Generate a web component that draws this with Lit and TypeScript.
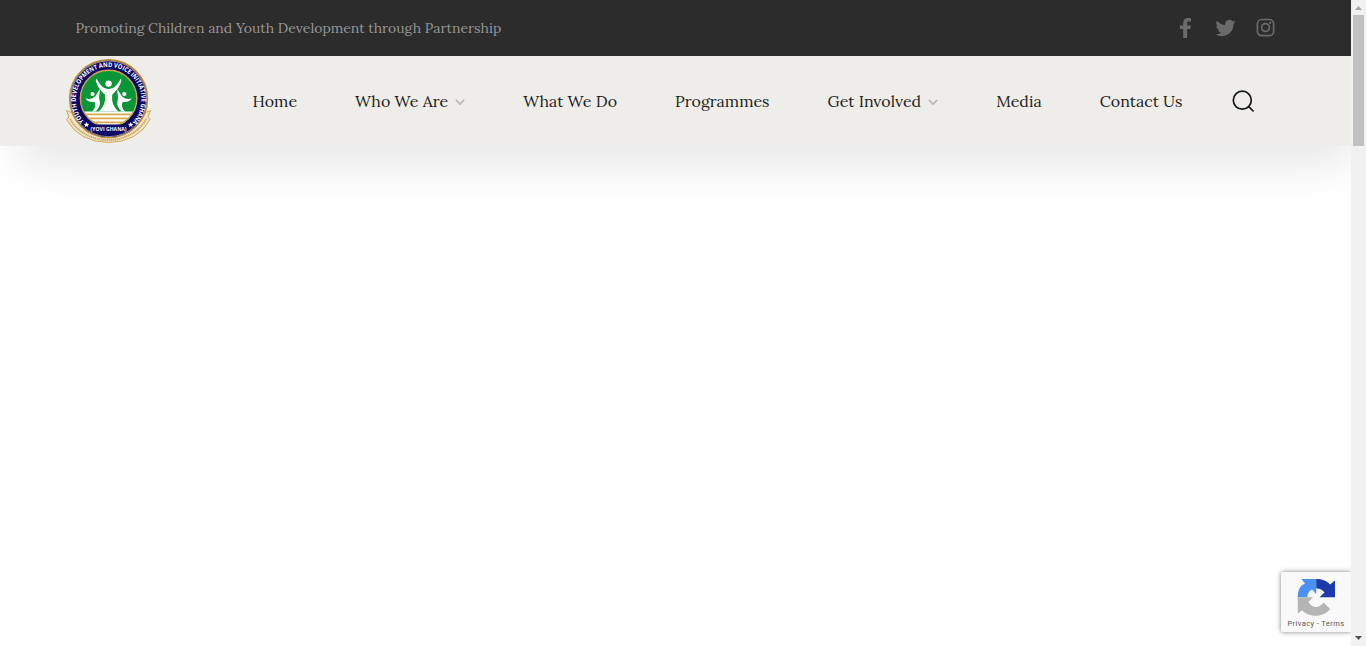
import { LitElement, html, css } from "lit";
import { customElement } from "lit/decorators.js";

type NavItem = { label: string; menu?: boolean };

const NAV: NavItem[] = [
  { label: "Home" },
  { label: "Who We Are", menu: true },
  { label: "What We Do" },
  { label: "Programmes" },
  { label: "Get Involved", menu: true },
  { label: "Media" },
  { label: "Contact Us" },
];

@customElement("yovi-logo")
class YoviLogo extends LitElement {
  static styles = css`
    :host { display: block; flex: none; width: 86px; height: 86px; }
    svg { display: block; overflow: visible; }
    .ring { font: 700 6.5px "Open Sans", sans-serif; fill: #fff; }
    .name { font: 700 5.6px "Open Sans", sans-serif; fill: #fff; }
  `;
  render() {
    return html`<svg width="86" height="86" viewBox="0 0 86 86">
      <defs>
        <path id="arc" d="M18 63.500 A32.800 32.800 0 1 1 67.200 63.500" />
        <clipPath id="disc"><circle cx="42.600" cy="40.500" r="27.500" /></clipPath>
      </defs>
      <path d="M.5 52.500L4 54 81 54 84.500 52.500 82 59 84 61.500Q72 84 42.600 84.500 13 84 .5 61.500L3 59Z" fill="#f0e5cc" stroke="#cf9c48" stroke-width=".9" />
      <path d="M4 61Q16 81 42.600 82.300 68 81 80.500 61" fill="none" stroke="#cda55e" stroke-width="2" stroke-dasharray="1.300 .7" />
      <circle cx="42.600" cy="40.800" r="39" fill="#0b0963" stroke="#c48e30" stroke-width="1.400" />
      <circle cx="42.600" cy="40.800" r="37.900" fill="none" stroke="#e6dcc2" stroke-width=".6" />
      <circle cx="42.600" cy="40.500" r="28.200" fill="#089636" stroke="#d3a550" stroke-width="1.400" />
      <g clip-path="url(#disc)">
        <path d="M10 53.500H74V70H10Z" fill="#fff" />
        <path d="M10 56.300H74M10 60.300H74M10 64.300H74" stroke="#dda849" stroke-width="1.700" />
      </g>
      <path d="M20.500 66.500H64.700C58 71 50 73 42.600 73S26 71 20.500 66.500Z" fill="#0b0963" />
      <g fill="#fff">
        <circle cx="42.600" cy="25.600" r="3.200" />
        <circle cx="26.500" cy="36" r="2.100" />
        <circle cx="58.300" cy="36" r="2.100" />
        <path d="M30.800 21C34 27 37.500 31 42.600 31S51.500 27 54.400 21L55.500 22C54 29 50 33 46.300 36.500C45.500 43 47 49 52.600 53.500H32.600C38.200 49 39.700 43 38.900 36.500C35.200 33 31 29 29.700 22Z" />
        <path d="M19.500 40.500C23 41.500 27 41 29.500 38L33.800 31C34 36 32.500 39 33.500 42C35 47 32.500 51 29.500 53.500H26C29.500 50 30 47 28.500 44C25 44 21 43.500 19.500 40.500ZM65.700 40.500C62.200 41.500 58.200 41 55.700 38L51.400 31C51.200 36 52.700 39 51.700 42C50.200 47 52.700 51 55.700 53.500H59.200C55.700 50 55.200 47 56.700 44C60.200 44 64.200 43.500 65.700 40.500Z" />
      </g>
      <text class="ring"><textPath href="#arc" textLength="151" lengthAdjust="spacingAndGlyphs">YOUTH DEVELOPMENT AND VOICE INITIATIVE GHANA</textPath></text>
      <text class="name" x="42.600" y="73" text-anchor="middle" textLength="36" lengthAdjust="spacingAndGlyphs">(YOVI GHANA)</text>
      <path d="M20.500 64l.8 1.700 1.900.2-1.400 1.300.4 1.900-1.700-1-1.700 1 .4-1.900-1.400-1.300 1.900-.2zM64.700 64l.8 1.700 1.900.2-1.400 1.300.4 1.900-1.700-1-1.700 1 .4-1.900-1.400-1.300 1.900-.2z" fill="#fff" />
    </svg>`;
  }
}

@customElement("app-root")
class AppRoot extends LitElement {
  static styles = css`
    :host { display: flex; width: 100%; height: 646px; overflow: hidden; background: #fff; position: relative; font-family: Lora, "Liberation Serif", serif; }
    svg { display: block; flex: none; overflow: visible; }
    .page { flex: 1; min-width: 0; overflow: hidden; position: relative; }
    .top { height: 56px; box-sizing: border-box; padding: 0 75.500px; background: #2c2c2c; display: flex; align-items: center; justify-content: space-between; }
    .social { display: flex; gap: 20px; align-items: center; fill: #6b6b6b; }
    .fb { margin-right: 4px; }
    .tag { font-size: 14px; line-height: 24px; color: #989898; white-space: nowrap; }
    .link { font-size: 16px; line-height: 24px; color: #1c1e22; white-space: nowrap; }
    .bar { height: 90px; box-sizing: border-box; background: #eeede9; box-shadow: 10px 28px 46px -10px rgba(0, 0, 0, .1); display: flex; align-items: center; padding-left: 66px; }
    nav { display: flex; gap: 58px; margin-left: 100.600px; }
    .item { display: flex; gap: 7px; align-items: center; height: 24px; }
    .chev { margin-top: 2px; }
    .search { margin-left: 49.500px; }
    .scroll { width: 15px; background: #f1f1f1; display: flex; flex-direction: column; align-items: center; }
    .thumb { width: 11px; height: 131px; background: #c1c1c1; }
    .arrow { height: 15px; }
    .fill { flex: 1; }
    .badge { position: absolute; right: 0; bottom: 14px; width: 70px; height: 60px; background: #f9f9f9; box-shadow: 0 0 5px #808080; border-radius: 2px 0 0 2px; }
    .legal { font: 7.5px Roboto, sans-serif; fill: #555; }
  `;

  private chevron() {
    return html`<svg class="chev" width="10" height="8" viewBox="0 0 10 8"><path d="M.8 1.900L5 6.100 9.200 1.900" fill="none" stroke="#b5b5b3" stroke-width="1.500" /></svg>`;
  }

  render() {
    return html`
      <div class="page">
        <div class="top">
          <div class="tag">Promoting Children and Youth Development through Partnership</div>
          <div class="social">
            <svg class="fb" width="12" height="20" viewBox="0.500 0 12 20"><path d="M11.500 .3V3.600H9.400C7.900 3.600 7.600 4.300 7.600 5.300V7.500H11.300L10.800 11.100H7.600V20H3.700V11.100H.4V7.500H3.700V4.700C3.700 1.600 5.600 0 8.500 0C9.800 0 11 .1 11.500 .3Z" /></svg>
            <svg width="20" height="20" viewBox="0.500 0 24 24"><path d="M23.950 4.570a10 10 0 0 1-2.820.77 4.960 4.960 0 0 0 2.160-2.720 9.900 9.900 0 0 1-3.120 1.190 4.920 4.920 0 0 0-8.380 4.480A13.930 13.930 0 0 1 1.640 3.160a4.920 4.920 0 0 0 1.520 6.570 4.900 4.900 0 0 1-2.230-.61v.06a4.920 4.920 0 0 0 3.950 4.830 5 5 0 0 1-2.210.08 4.940 4.940 0 0 0 4.600 3.420A9.870 9.870 0 0 1 0 19.540a13.990 13.990 0 0 0 7.550 2.210c9.050 0 14-7.500 14-13.980 0-.21 0-.42-.02-.63a9.940 9.940 0 0 0 2.420-2.570z" /></svg>
            <svg width="20" height="20" viewBox="0.500 0 20 20"><rect x="1.900" y="1.500" width="16.200" height="16.200" rx="4.300" fill="none" stroke="#6b6b6b" stroke-width="1.700" /><circle cx="10" cy="9.600" r="3.900" fill="none" stroke="#6b6b6b" stroke-width="1.700" /><circle cx="14.700" cy="4.900" r="1.100" /></svg>
          </div>
        </div>
        <div class="bar">
          <yovi-logo></yovi-logo>
          <nav>${NAV.map((n) => html`<div class="item"><span class="link">${n.label}</span>${n.menu ? this.chevron() : ""}</div>`)}</nav>
          <svg class="search" width="23" height="23" viewBox="0 0 23 23"><g fill="none" stroke="#15171b" stroke-width="1.700"><circle cx="10.300" cy="10.200" r="9" /><path d="M16.500 16.400L21.600 21.500" /></g></svg>
        </div>
        <div class="badge">
          <svg width="70" height="60" viewBox="0 0 70 60">
            <path d="M20.500 7H35.200V22L31 17.500C28 19 26.500 21.500 26.300 25.200H16.700C16.700 20 18 16.500 20.500 13.500L24 11.500Z" fill="#4a90f5" />
            <path d="M35.200 7C41 7 45.500 8.500 49 12.500L54 8.500V25.200H38.500L43.500 20.500C41.500 17.500 39 16.500 35.200 16.200Z" fill="#1c3aa9" />
            <path d="M16.700 25.200H32L27.500 30C31 36.500 38.500 36.500 42.500 30.500L49.300 37C42 46 28.500 45.500 21 38.500L16.700 41.500Z" fill="#b5b5b5" />
            <text class="legal" x="6.500" y="54" textLength="56.500" lengthAdjust="spacing">Privacy - Terms</text>
          </svg>
        </div>
      </div>
      <div class="scroll">
        <svg class="arrow" width="15" height="15"><path d="M4 10L7.500 6 11 10Z" fill="#a3a3a3" /></svg>
        <div class="thumb"></div>
        <div class="fill"></div>
        <svg class="arrow" width="15" height="15"><path d="M4 5L7.500 9 11 5Z" fill="#505050" /></svg>
      </div>`;
  }
}
